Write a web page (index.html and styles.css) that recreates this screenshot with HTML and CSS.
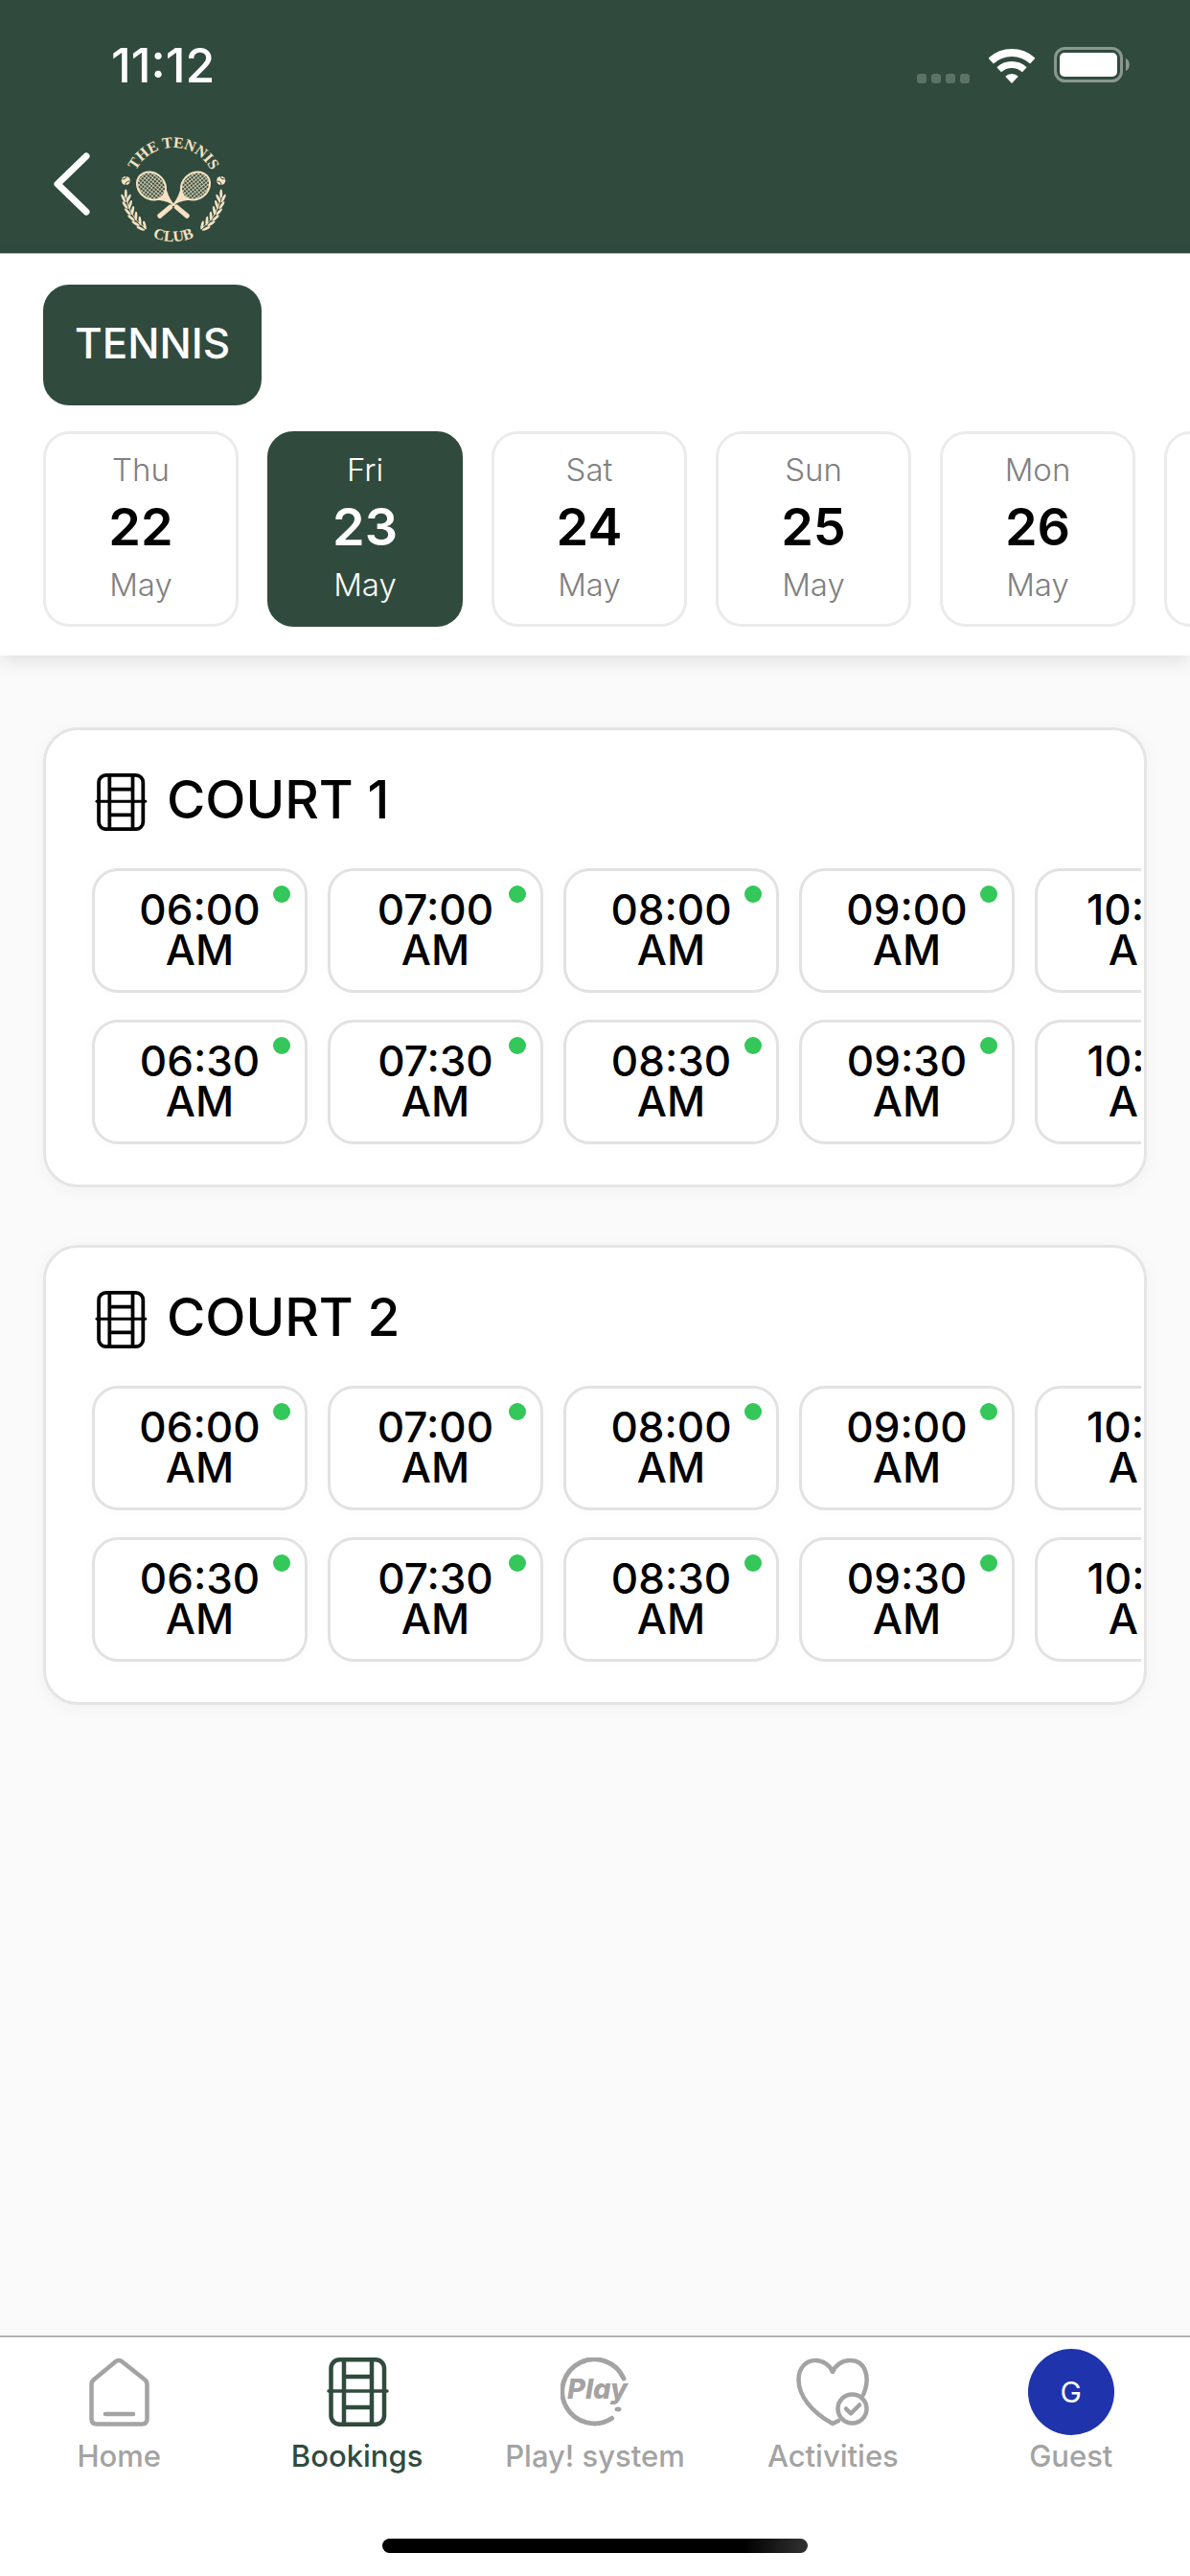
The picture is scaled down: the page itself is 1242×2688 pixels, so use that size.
FILE: index.html
```html
<!DOCTYPE html>
<html lang="en">
<head>
  <meta charset="UTF-8">
  <meta name="viewport" content="width=device-width, initial-scale=1.0">
  <title>The Tennis Club - Bookings</title>
  <link rel="stylesheet" href="styles.css">
</head>
<body>

  <!-- Shared icons -->
  <svg class="sprite" aria-hidden="true">
    <symbol id="icon-court" viewBox="0 0 72 72">
      <g fill="none" stroke="currentColor" stroke-width="4.5">
        <rect x="8.5" y="2.3" width="55.5" height="67.5" rx="9"/>
        <path d="M22 2v68M51 2v68M22 20h29M22 52h29"/>
        <path d="M6 35h61" stroke-width="3.5" stroke-linecap="round"/>
      </g>
    </symbol>
  </svg>

  <!-- Header -->
  <header>
    <div class="status-bar">
      <span class="time">11:12</span>
      <div class="status-icons">
        <div class="signal"><i></i><i></i><i></i><i></i></div>
        <svg class="wifi" width="48" height="36" viewBox="0 0 48 36">
          <g fill="none" stroke="#fff">
            <path d="M2.2 12.6A32 32 0 0 1 45.8 12.6" stroke-width="8"/>
            <path d="M10.7 21.8A19.5 19.5 0 0 1 37.3 21.8" stroke-width="7"/>
          </g>
          <path d="M24 36l-6.8-7.3a10 10 0 0 1 13.6 0z" fill="#fff"/>
        </svg>
        <svg class="battery" width="80" height="38" viewBox="0 0 80 38">
          <rect x="1.5" y="1.5" width="69" height="34" rx="10" fill="none" stroke="#8a988f" stroke-width="3"/>
          <rect x="6" y="6" width="60" height="25" rx="5" fill="#fff"/>
          <path d="M75 12c5 2 5 11 0 13z" fill="#8a988f"/>
        </svg>
      </div>
    </div>
    <div class="title-bar">
      <button class="back" aria-label="Back">
        <svg width="38" height="78" viewBox="0 0 38 78">
          <path d="M34 4L4 33l30 29" fill="none" stroke="#fff" stroke-width="7" stroke-linecap="round" stroke-linejoin="round"/>
        </svg>
      </button>
      <svg class="logo" width="110" height="108" viewBox="0 0 110 108" role="img" aria-label="The Tennis Club">
        <defs>
          <path id="arc-top" d="M11 54A44 44 0 0 1 99 54"/>
          <path id="arc-bottom" d="M1 54A54 54 0 0 0 109 54"/>
          <pattern id="strings" width="3" height="3" patternUnits="userSpaceOnUse">
            <path d="M0 0h3M0 0v3" stroke="#f6e2c3" stroke-width="1.4"/>
          </pattern>
          <g id="leaf-pair">
            <ellipse cx="2.8" cy="63" rx="1.4" ry="4.6" transform="rotate(-26 2.8 63)"/>
            <ellipse cx="8.2" cy="63" rx="1.4" ry="4.6" transform="rotate(26 8.2 63)"/>
          </g>
          <g id="branch">
            <circle cx="5.3" cy="44.5" r="4.6"/>
            <path d="M1.5 43q4 .5 4.5-3M5 49q0-4 4.500-4" fill="none" stroke="#304b3e" stroke-width="1"/>
            <ellipse cx="5.3" cy="58" rx="1.4" ry="4.5"/>
            <use href="#leaf-pair"/>
            <use href="#leaf-pair" transform="rotate(-8 55 54)"/>
            <use href="#leaf-pair" transform="rotate(-16 55 54)"/>
            <use href="#leaf-pair" transform="rotate(-24 55 54)"/>
            <use href="#leaf-pair" transform="rotate(-32 55 54)"/>
            <use href="#leaf-pair" transform="rotate(-40 55 54)"/>
            <path d="M5.500 60A50 50 0 0 0 25 94" fill="none" stroke="#f6e2c3" stroke-width="1"/>
          </g>
          <g id="racket" transform="rotate(40 32 50)">
            <ellipse cx="32" cy="50" rx="16" ry="13.5" fill="url(#strings)" stroke="#f6e2c3" stroke-width="2"/>
            <path d="M44 59q8-6 16-8v-2q-8-2-16-8q4 9 4 9t-4 9z"/>
            <path d="M58 49h8v2h-8z"/>
            <rect x="64" y="47.5" width="19" height="5" rx="2"/>
          </g>
        </defs>
        <g fill="#f6e2c3">
          <text class="logo-text"><textPath href="#arc-top" startOffset="50%">THE TENNIS</textPath></text>
          <text class="logo-text"><textPath href="#arc-bottom" startOffset="50%">CLUB</textPath></text>
          <use href="#branch"/>
          <use href="#branch" transform="matrix(-1 0 0 1 110 0)"/>
          <use href="#racket"/>
          <use href="#racket" transform="matrix(-1 0 0 1 110 0)"/>
        </g>
      </svg>
    </div>
  </header>

  <!-- Sport and date filters -->
  <section class="filters">
    <button class="sport">TENNIS</button>
    <div class="dates">
      <button class="date"><span>Thu</span><strong>22</strong><span>May</span></button>
      <button class="date active"><span>Fri</span><strong>23</strong><span>May</span></button>
      <button class="date"><span>Sat</span><strong>24</strong><span>May</span></button>
      <button class="date"><span>Sun</span><strong>25</strong><span>May</span></button>
      <button class="date"><span>Mon</span><strong>26</strong><span>May</span></button>
      <button class="date"><span>Tue</span><strong>27</strong><span>May</span></button>
    </div>
  </section>

  <!-- Courts -->
  <main>
    <section class="court">
      <h2><svg width="60" height="60"><use href="#icon-court"/></svg>COURT 1</h2>
      <div class="slots">
        <button class="slot">06:00 AM</button>
        <button class="slot">06:30 AM</button>
        <button class="slot">07:00 AM</button>
        <button class="slot">07:30 AM</button>
        <button class="slot">08:00 AM</button>
        <button class="slot">08:30 AM</button>
        <button class="slot">09:00 AM</button>
        <button class="slot">09:30 AM</button>
        <button class="slot">10:00 AM</button>
        <button class="slot">10:30 AM</button>
      </div>
    </section>

    <section class="court">
      <h2><svg width="60" height="60"><use href="#icon-court"/></svg>COURT 2</h2>
      <div class="slots">
        <button class="slot">06:00 AM</button>
        <button class="slot">06:30 AM</button>
        <button class="slot">07:00 AM</button>
        <button class="slot">07:30 AM</button>
        <button class="slot">08:00 AM</button>
        <button class="slot">08:30 AM</button>
        <button class="slot">09:00 AM</button>
        <button class="slot">09:30 AM</button>
        <button class="slot">10:00 AM</button>
        <button class="slot">10:30 AM</button>
      </div>
    </section>
  </main>

  <!-- Bottom navigation -->
  <footer>
    <nav>
      <a href="#home">
        <span class="tab-icon">
          <svg width="72" height="72" viewBox="0 0 72 72" fill="none" stroke="currentColor" stroke-width="4.5" stroke-linecap="round" stroke-linejoin="round">
            <path d="M33 4q3-2 6 0l24 19q2.500 2 2.500 5v36q0 5.500-5.500 5.500H13q-5.500 0-5.500-5.500V28q0-3 2.500-5z"/>
            <path d="M22 59h29"/>
          </svg>
        </span>
        Home
      </a>
      <a href="#bookings" class="active">
        <span class="tab-icon"><svg width="72" height="72"><use href="#icon-court"/></svg></span>
        Bookings
      </a>
      <a href="#play">
        <span class="tab-icon">
          <svg width="72" height="72" viewBox="0 0 72 72">
            <path d="M66 22A33.500 33.500 0 1 0 53.500 63.500" fill="none" stroke="currentColor" stroke-width="5" stroke-linecap="round"/>
            <text class="play-text" x="7" y="43">Play</text>
            <ellipse cx="60" cy="54" rx="3.5" ry="2.5" fill="currentColor"/>
          </svg>
        </span>
        Play! system
      </a>
      <a href="#activities">
        <span class="tab-icon">
          <svg width="76" height="72" viewBox="0 0 76 72" fill="none" stroke="currentColor" stroke-width="4.5" stroke-linecap="round" stroke-linejoin="round">
            <path d="M70 39C78 20 72 3 56 3C48 3 41 8 38 15C35 8 28 3 20 3C10 3 2.500 11 2.500 23C2.500 40 16 57 38 69L44 66"/>
            <circle cx="58.5" cy="53.5" r="15"/>
            <path d="M52 53.500l5 5 9-9"/>
          </svg>
        </span>
        Activities
      </a>
      <a href="#guest">
        <span class="tab-icon"><span class="avatar">G</span></span>
        Guest
      </a>
    </nav>
    <div class="home-indicator"></div>
  </footer>

</body>
</html>
```
FILE: styles.css
```css
* {
  box-sizing: border-box;
}
body {
  margin: 0;
  min-height: 100vh;
  display: flex;
  flex-direction: column;
  font-family: Inter, "Liberation Sans", sans-serif;
  background-color: #fafafa;
  color: #000;
  overflow-x: hidden;
}
button {
  font-family: inherit;
  color: inherit;
  cursor: pointer;
}
svg {
  display: block;
}
.sprite {
  display: none;
}

/* Header */
header {
  background-color: #304b3e;
  color: #fff;
}
.status-bar {
  display: flex;
  justify-content: space-between;
  align-items: center;
  height: 132px;
  padding: 3px 62px 0 116px;
}
.time {
  font-size: 50px;
  font-weight: 500;
}
.status-icons {
  display: flex;
  align-items: flex-end;
  gap: 20px;
}
.signal {
  display: flex;
  gap: 5px;
}
.signal i {
  width: 10px;
  height: 10px;
  border-radius: 3px;
  background-color: #5d7267;
}
.title-bar {
  display: flex;
  align-items: center;
  gap: 32px;
  height: 132px;
  padding: 0 56px;
}
.back {
  padding: 0;
  border: none;
  background: none;
}
.logo {
  overflow: visible;
}
.logo-text {
  font-family: "Liberation Serif", serif;
  font-size: 16px;
  font-weight: bold;
  text-anchor: middle;
}

/* Sport and date filters */
.filters {
  position: relative;
  padding: 32px 0 30px 45px;
  border-top: 1px solid #b5bab7;
  background-color: #fff;
  box-shadow: 0 6px 18px rgba(0, 0, 0, 0.1);
}
.sport {
  display: block;
  height: 126px;
  margin-bottom: 27px;
  padding: 0 33px 4px;
  border: none;
  border-radius: 27px;
  background-color: #304b3e;
  color: #fff;
  font-size: 44px;
  font-weight: 500;
}
.dates {
  display: flex;
  gap: 30px;
  overflow-x: auto;
  scrollbar-width: none;
}
.date {
  display: flex;
  flex: 0 0 204px;
  flex-direction: column;
  align-items: center;
  gap: 10px;
  padding: 17px 0 21px;
  border: 3px solid #ebebeb;
  border-radius: 27px;
  background-color: #fff;
}
.date span {
  font-size: 33px;
  font-weight: 300;
  line-height: 40px;
  color: #808080;
}
.date strong {
  font-size: 54px;
  font-weight: 600;
  line-height: 60px;
}
.date.active {
  border-color: #304b3e;
  background-color: #304b3e;
  color: #fff;
}
.date.active span {
  color: #fff;
}

/* Courts */
main {
  display: flex;
  flex: 1;
  flex-direction: column;
  gap: 60px;
  padding: 75px 45px;
}
.court {
  padding: 45px 3px 22px 0;
  border: 3px solid #e5e5e5;
  border-radius: 36px;
  background-color: #fff;
  box-shadow: 0 3px 18px rgba(0, 0, 0, 0.04);
}
.court h2 {
  display: flex;
  align-items: flex-start;
  gap: 18px;
  margin: 0;
  padding-left: 48px;
  font-size: 55px;
  font-weight: 500;
  line-height: 54px;
}
.slots {
  display: grid;
  grid-template-rows: auto auto;
  grid-auto-flow: column;
  grid-auto-columns: 225px;
  gap: 28px 21px;
  margin-top: 19px;
  padding: 20px 48px;
  overflow-x: auto;
  scrollbar-width: none;
}
.slot {
  position: relative;
  padding: 19px 30px 21px;
  border: 3px solid #e2e2e2;
  border-radius: 27px;
  background-color: #fff;
  box-shadow: 0 0 15px rgba(0, 0, 0, 0.02);
  font-size: 44px;
  font-weight: 500;
  line-height: 42px;
}
/* Available marker */
.slot::after {
  content: "";
  position: absolute;
  top: 15px;
  right: 15px;
  width: 18px;
  height: 18px;
  border-radius: 50%;
  background-color: #34c759;
}

/* Bottom navigation */
footer {
  border-top: 2px solid #b3b3b3;
  background-color: #fff;
}
nav {
  display: grid;
  grid-template-columns: repeat(5, 1fr);
  padding-top: 12px;
}
nav a {
  display: flex;
  flex-direction: column;
  align-items: center;
  gap: 4px;
  color: #a3a3a3;
  font-size: 31px;
  font-weight: 500;
  line-height: 36px;
  text-decoration: none;
}
nav a.active {
  color: #304b3e;
}
.tab-icon {
  display: flex;
  align-items: center;
  height: 90px;
}
.play-text {
  font-size: 29px;
  font-style: italic;
  font-weight: 800;
  fill: currentColor;
}
.avatar {
  width: 90px;
  height: 90px;
  border-radius: 50%;
  background-color: #1e33ac;
  color: #fff;
  font-size: 30px;
  font-weight: 400;
  line-height: 90px;
  text-align: center;
}
.home-indicator {
  width: 444px;
  height: 15px;
  margin: 68px auto 24px;
  border-radius: 8px;
  background: linear-gradient(to right, #000 85%, #333);
}
```
